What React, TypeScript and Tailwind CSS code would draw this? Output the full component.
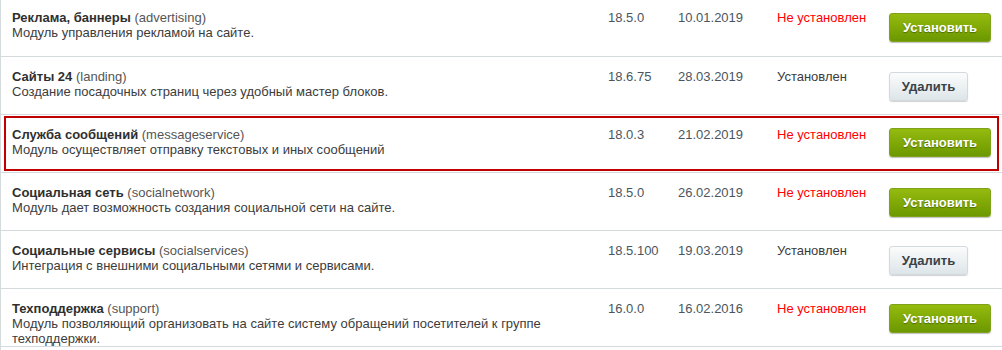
import React from "react";

type Module = {
  name: string;
  code: string;
  description: string;
  version: string;
  date: string;
  installed: boolean;
  selected?: boolean;
};

const modules: Module[] = [
  {
    name: "Реклама, баннеры",
    code: "advertising",
    description: "Модуль управления рекламой на сайте.",
    version: "18.5.0",
    date: "10.01.2019",
    installed: false,
  },
  {
    name: "Сайты 24",
    code: "landing",
    description: "Создание посадочных страниц через удобный мастер блоков.",
    version: "18.6.75",
    date: "28.03.2019",
    installed: true,
  },
  {
    name: "Служба сообщений",
    code: "messageservice",
    description: "Модуль осуществляет отправку текстовых и иных сообщений",
    version: "18.0.3",
    date: "21.02.2019",
    installed: false,
    selected: true,
  },
  {
    name: "Социальная сеть",
    code: "socialnetwork",
    description: "Модуль дает возможность создания социальной сети на сайте.",
    version: "18.5.0",
    date: "26.02.2019",
    installed: false,
  },
  {
    name: "Социальные сервисы",
    code: "socialservices",
    description: "Интеграция с внешними социальными сетями и сервисами.",
    version: "18.5.100",
    date: "19.03.2019",
    installed: true,
  },
  {
    name: "Техподдержка",
    code: "support",
    description:
      "Модуль позволяющий организовать на сайте систему обращений посетителей к группе техподдержки.",
    version: "16.0.0",
    date: "16.02.2016",
    installed: false,
  },
];

function ActionButton({ installed }: { installed: boolean }) {
  if (installed) {
    return (
      <button
        type="button"
        className="h-[29px] w-[79px] rounded-[3px] border border-[#d3dadf] bg-gradient-to-b from-[#fbfcfc] to-[#dde5e9] text-[13px] font-bold text-[#3a4147] shadow-[0_1px_1px_rgba(0,0,0,0.18)]"
      >
        Удалить
      </button>
    );
  }
  return (
    <button
      type="button"
      className="h-[29px] w-[102px] rounded-[3px] border border-[#7fa21a] bg-gradient-to-b from-[#95bb0f] to-[#6c9800] text-[13px] font-bold text-white shadow-[0_1px_1px_rgba(0,0,0,0.25)] [text-shadow:0_1px_1px_rgba(0,0,0,0.35)]"
    >
      Установить
    </button>
  );
}

function Row({ m, first }: { m: Module; first?: boolean }) {
  return (
    <div
      className={
        "border-b border-[#d5dadd] " + (first ? "h-[57px] pt-0" : "h-[58px] pt-[2px]")
      }
    >
      <div
        className={
          "flex h-full pr-[3px] " +
          (m.selected
            ? "mx-[3px] mb-[4px] -mt-[1px] border-2 border-[#c00000] pt-[9px] pl-[6px]"
            : "pl-[11px] pt-[10px]")
        }
      >
        <div className="w-[596px] shrink-0 pr-2 leading-[15px]">
          <div className="text-[#2f2f2f]">
            <span className="font-bold">{m.name}</span>{" "}
            <span className="text-[#555]">({m.code})</span>
          </div>
          <div className="text-[#3c3c3c]">{m.description}</div>
        </div>
        <div className="w-[70px] shrink-0 leading-[15px] text-[#4a5560]">{m.version}</div>
        <div className="w-[99px] shrink-0 leading-[15px] text-[#4a5560]">{m.date}</div>
        <div
          className={
            "w-[112px] shrink-0 leading-[15px] " +
            (m.installed ? "text-[#3c3c3c]" : "text-[#ff0000]")
          }
        >
          {m.installed ? "Установлен" : "Не установлен"}
        </div>
        <div className={m.selected ? "pt-[1px]" : "pt-[3px]"}>
          <ActionButton installed={m.installed} />
        </div>
      </div>
    </div>
  );
}

export default function App() {
  return (
    <div className="h-[350px] w-[1002px] overflow-hidden bg-white font-['Liberation_Sans',Arial,sans-serif] text-[13px]">
      <div className="h-full border-l border-[#d5dadd]">
        {modules.map((m, i) => (
          <Row key={m.code} m={m} first={i === 0} />
        ))}
      </div>
    </div>
  );
}
